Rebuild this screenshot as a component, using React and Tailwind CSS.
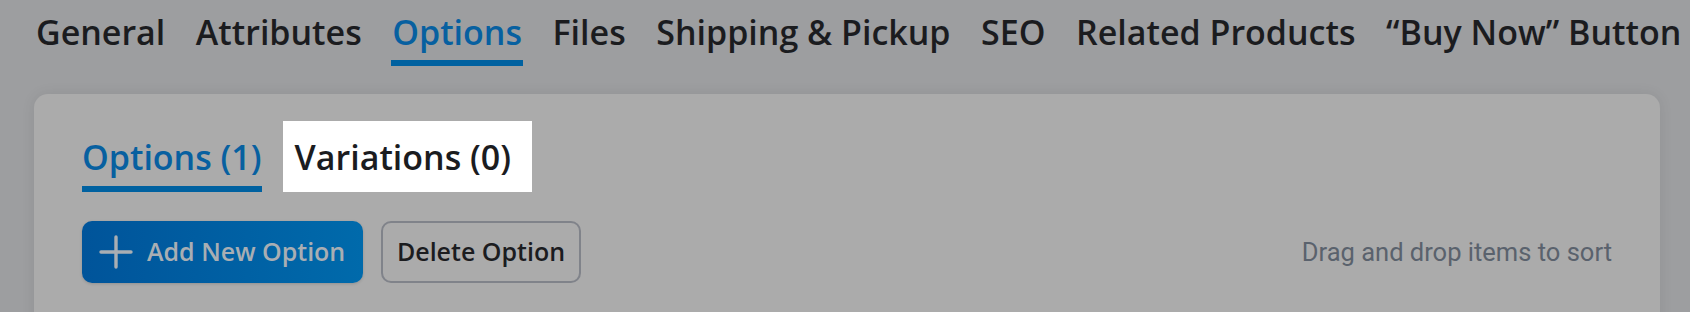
const tabs = ['General', 'Attributes', 'Options', 'Files', 'Shipping & Pickup', 'SEO', 'Related Products', '“Buy Now” Button'];

function PlusIcon() {
  return (
    <svg width="34" height="34" viewBox="0 0 34 34" fill="none" stroke="currentColor" strokeWidth="3.4" strokeLinecap="round">
      <path d="M17 2v30M2 17h30" />
    </svg>
  );
}

export default function App() {
  return (
    <div className="w-[1690px] h-[312px] overflow-hidden bg-[#9d9ea0] font-['Open_Sans',sans-serif]">
      <nav className="flex gap-[30.5px] pl-[36px] pt-[12px] h-[94px]">
        {tabs.map((t) => (
          <div key={t} className="flex flex-col">
            <span
              className={`text-[34px] leading-[40px] font-semibold whitespace-nowrap ${
                t === 'Options' ? 'text-[#0760a0]' : 'text-[#1b1c1f]'
              }`}
            >
              {t}
            </span>
            {t === 'Options' && <div className="mt-[8px] h-[6px] -mx-[1px] bg-[#0061a0]" />}
          </div>
        ))}
      </nav>

      <section className="ml-[34px] mr-[30px] h-[240px] rounded-t-[14px] bg-[#ababab] px-[48px] pt-[27px] shadow-[0_0_14px_rgba(0,0,0,0.08)]">
        <div className="flex items-end gap-[21px]">
          <div className="flex flex-col">
            <span className="text-[34px] leading-[40px] font-semibold text-[#0760a0] whitespace-nowrap">Options (1)</span>
            <div className="mt-[9px] h-[6px] bg-[#0061a0]" />
          </div>
          <div className="h-[71px] w-[249px] bg-white pl-[12px] pt-[16px]">
            <span className="block text-[34px] leading-[40px] font-semibold text-[#1b1c1f] whitespace-nowrap">Variations (0)</span>
          </div>
        </div>

        <div className="mt-[29px] flex items-center">
          <button className="h-[62px] w-[281px] rounded-[10px] bg-gradient-to-r from-[#00549a] to-[#006aab] flex items-center pl-[17px] gap-[14px] text-[#a9aeb3] shadow-[0_1px_3px_rgba(0,0,0,0.15)]">
            <PlusIcon />
            <span className="text-[25px] font-semibold">Add New Option</span>
          </button>
          <button className="ml-[18px] h-[62px] w-[200px] rounded-[10px] border-2 border-[#80838a] bg-[#ababab] text-[25px] font-semibold text-[#1b1c1f]">
            Delete Option
          </button>
          <span className="ml-auto text-[25.5px] text-[#5a626d] font-['Roboto',sans-serif]">Drag and drop items to sort</span>
        </div>
      </section>
    </div>
  );
}
